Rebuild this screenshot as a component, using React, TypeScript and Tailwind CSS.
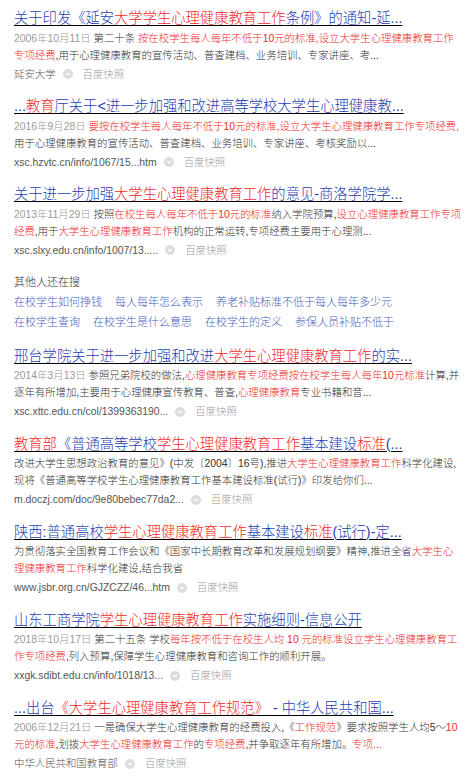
import React from "react";

type Seg = [string, "b" | "r" | "g" | "d"];

const FONT = { fontFamily: '"Liberation Sans", "Noto Sans CJK SC", sans-serif' };

function Segs({ segs }: { segs: Seg[] }) {
  return (
    <>
      {segs.map(([t, c], i) => {
        const cls =
          c === "r"
            ? "text-[#f22a2a]"
            : c === "b"
            ? "text-[#2440b3]"
            : c === "g"
            ? "text-[#9a9a9a]"
            : "text-[#333333]";
        return (
          <span key={i} className={cls}>
            {t}
          </span>
        );
      })}
    </>
  );
}

function SnapIcon() {
  return (
    <span className="inline-flex h-[10px] w-[10px] items-center justify-center rounded-full bg-[#dcdcdc]">
      <svg width="6" height="4" viewBox="0 0 6 4">
        <path d="M0.8 0.8 L3 3 L5.2 0.8" fill="none" stroke="#ffffff" strokeWidth="1.2" />
      </svg>
    </span>
  );
}

type Result = { title: Seg[]; lines: Seg[][]; source: string };

const results: Result[] = [
  {
    title: [["关于印发《延安", "b"], ["大学学生心理健康教育工作", "r"], ["条例》的通知-延...", "b"]],
    lines: [
      [["2006年10月11日", "g"], [" 第二十条 ", "d"], ["按在校学生每人每年不低于10元的标准,设立大学生心理健康教育工作", "r"]],
      [["专项经费", "r"], [",用于心理健康教育的宣传活动、普查建档、业务培训、专家讲座、考...", "d"]],
    ],
    source: "延安大学",
  },
  {
    title: [["...", "b"], ["教育", "r"], ["厅关于<进一步加强和改进高等学校大学生心理健康教...", "b"]],
    lines: [
      [["2016年9月28日", "g"], [" ", "d"], ["要按在校学生每人每年不低于10元的标准,设立大学生心理健康教育工作专项经费,", "r"]],
      [["用于心理健康教育的宣传活动、普查建档、业务培训、专家讲座、考核奖励以...", "d"]],
    ],
    source: "xsc.hzvtc.cn/info/1067/15...htm",
  },
  {
    title: [["关于进一步加强", "b"], ["大学生心理健康教育工作", "r"], ["的意见-商洛学院学...", "b"]],
    lines: [
      [["2013年11月29日", "g"], [" 按照", "d"], ["在校生每人每年不低于10元的标准", "r"], ["纳入学院预算,", "d"], ["设立心理健康教育工作专项", "r"]],
      [["经费", "r"], [",用于", "d"], ["大学生心理健康教育工作", "r"], ["机构的正常运转,专项经费主要用于心理测...", "d"]],
    ],
    source: "xsc.slxy.edu.cn/info/1007/13.....",
  },
];

const results2: Result[] = [
  {
    title: [["邢台学院关于进一步加强和改进", "b"], ["大学生心理健康教育工作", "r"], ["的实...", "b"]],
    lines: [
      [["2014年3月13日", "g"], [" 参照兄弟院校的做法,", "d"], ["心理健康教育专项经费按在校学生每人每年10元标准", "r"], ["计算,并", "d"]],
      [["逐年有所增加,主要用于心理健康宣传教育、普查,", "d"], ["心理健康教育", "r"], ["专业书籍和音...", "d"]],
    ],
    source: "xsc.xttc.edu.cn/col/1399363190...",
  },
  {
    title: [["教育部", "r"], ["《普通高等学校", "b"], ["学生心理健康教育工作", "r"], ["基本建设", "b"], ["标准", "r"], ["(...", "b"]],
    lines: [
      [["改进大学生思想政治教育的意见》(中发〔2004〕16号),推进", "d"], ["大学生心理健康教育工作", "r"], ["科学化建设,", "d"]],
      [["现将《普通高等学校学生心理健康教育工作基本建设标准(试行)》印发给你们...", "d"]],
    ],
    source: "m.doczj.com/doc/9e80bebec77da2...",
  },
  {
    title: [["陕西:普通高校", "b"], ["学生心理健康教育工作", "r"], ["基本建设", "b"], ["标准", "r"], ["(试行)-定...", "b"]],
    lines: [
      [["为贯彻落实全国教育工作会议和《国家中长期教育改革和发展规划纲要》精神,推进全省", "d"], ["大学生心", "r"]],
      [["理健康教育工作", "r"], ["科学化建设,结合我省", "d"]],
    ],
    source: "www.jsbr.org.cn/GJZCZZ/46...htm",
  },
  {
    title: [["山东工商学院", "b"], ["学生心理健康教育工作", "r"], ["实施细则-信息公开", "b"]],
    lines: [
      [["2018年10月17日", "g"], [" 第二十五条 学校", "d"], ["每年按不低于在校生人均 10 元的标准设立学生心理健康教育工", "r"]],
      [["作专项经费", "r"], [",列入预算,保障学生心理健康教育和咨询工作的顺利开展。", "d"]],
    ],
    source: "xxgk.sdibt.edu.cn/info/1018/13...",
  },
  {
    title: [["...出台", "b"], ["《大学生心理健康教育工作规范》", "r"], [" - 中华人民共和国...", "b"]],
    lines: [
      [["2006年12月21日", "g"], [" 一是确保大学生心理健康教育的经费投入,《", "d"], ["工作规范", "r"], ["》要求按照学生人均5～", "d"], ["10", "r"]],
      [["元的标准", "r"], [",划拨", "d"], ["大学生心理健康教育工作", "r"], ["的", "d"], ["专项经费", "r"], [",并争取逐年有所增加。", "d"], ["专项...", "r"]],
    ],
    source: "中华人民共和国教育部",
  },
];

function ResultCard({ r }: { r: Result }) {
  return (
    <div className="flex flex-col">
      <div className="h-[20px] whitespace-nowrap text-[14.3px] font-light leading-[20px] underline decoration-1 underline-offset-[2px]">
        <Segs segs={r.title} />
      </div>
      <div className="mt-[1.5px] flex flex-col text-[10.4px] font-light leading-[17px]">
        {r.lines.map((l, i) => (
          <div key={i} className="h-[17px] whitespace-nowrap">
            <Segs segs={l} />
          </div>
        ))}
      </div>
      <div className="mt-[2px] flex h-[17px] items-center whitespace-nowrap text-[10.4px] font-light leading-[17px]">
        <span className="text-[#555555]">{r.source}</span>
        <span className="ml-[7px] mr-[10px] flex items-center">
          <SnapIcon />
        </span>
        <span className="text-[#9a9a9a]">百度快照</span>
      </div>
    </div>
  );
}

const related1 = ["在校学生如何挣钱", "每人每年怎么表示", "养老补贴标准不低于每人每年多少元"];
const related2 = ["在校学生查询", "在校学生是什么意思", "在校学生的定义", "参保人员补贴不低于"];

export default function App() {
  return (
    <div className="min-h-[780px] w-[474px] bg-white px-[14px] pt-[8px]" style={FONT}>
      <div className="flex flex-col gap-[13.5px]">
        {results.map((r, i) => (
          <ResultCard key={i} r={r} />
        ))}
        <div className="flex flex-col font-light">
          <div className="h-[20px] text-[11px] leading-[20px] text-[#333333]">其他人还在搜</div>
          <div className="flex h-[20px] gap-[13px] whitespace-nowrap text-[11px] leading-[20px] text-[#4662c0]">
            {related1.map((t) => (
              <span key={t}>{t}</span>
            ))}
          </div>
          <div className="flex h-[20px] gap-[13px] whitespace-nowrap text-[11px] leading-[20px] text-[#4662c0]">
            {related2.map((t) => (
              <span key={t}>{t}</span>
            ))}
          </div>
        </div>
        {results2.map((r, i) => (
          <ResultCard key={i} r={r} />
        ))}
      </div>
    </div>
  );
}
